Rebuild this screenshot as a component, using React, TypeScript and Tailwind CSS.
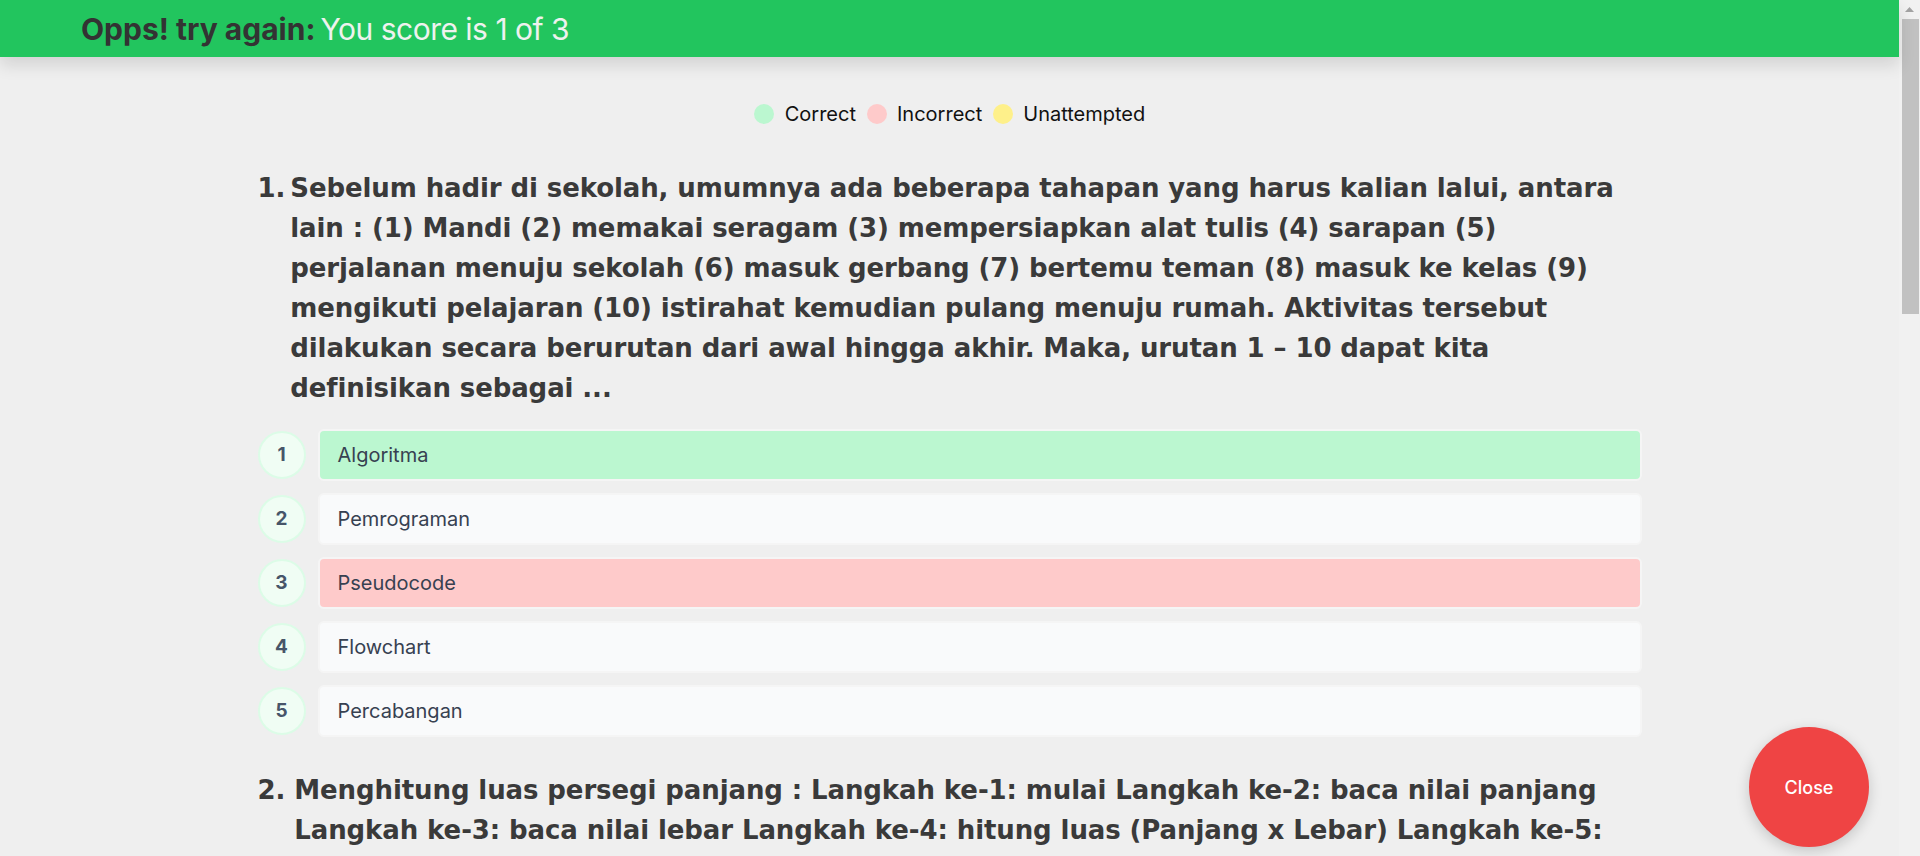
import React from "react";

const q1Lines = [
  "Sebelum hadir di sekolah, umumnya ada beberapa tahapan yang harus kalian lalui, antara",
  "lain : (1) Mandi (2) memakai seragam (3) mempersiapkan alat tulis (4) sarapan (5)",
  "perjalanan menuju sekolah (6) masuk gerbang (7) bertemu teman (8) masuk ke kelas (9)",
  "mengikuti pelajaran (10) istirahat kemudian pulang menuju rumah. Aktivitas tersebut",
  "dilakukan secara berurutan dari awal hingga akhir. Maka, urutan 1 – 10 dapat kita",
  "definisikan sebagai ...",
];

const q2Lines = [
  "Menghitung luas persegi panjang : Langkah ke-1: mulai Langkah ke-2: baca nilai panjang",
  "Langkah ke-3: baca nilai lebar Langkah ke-4: hitung luas (Panjang x Lebar) Langkah ke-5:",
];

type Opt = { n: number; label: string; state: "correct" | "wrong" | "none" };
const options: Opt[] = [
  { n: 1, label: "Algoritma", state: "correct" },
  { n: 2, label: "Pemrograman", state: "none" },
  { n: 3, label: "Pseudocode", state: "wrong" },
  { n: 4, label: "Flowchart", state: "none" },
  { n: 5, label: "Percabangan", state: "none" },
];

function Question({ num, lines, gap }: { num: string; lines: string[]; gap: string }) {
  return (
    <div className="flex text-[26px] leading-[40px] font-bold text-[#3a3a3a] font-['DejaVu_Sans',sans-serif] tracking-[-0.1px]">
      <span className={"whitespace-nowrap " + gap}>{num}</span>
      <div className="whitespace-nowrap">
        {lines.map((l, i) => (
          <div key={i}>{l}</div>
        ))}
      </div>
    </div>
  );
}

export default function App() {
  return (
    <div className="h-[856px] w-full overflow-hidden bg-[#efefef] flex font-['Inter','Noto_Sans',sans-serif]">
      <div className="flex-1 min-w-0 relative flex flex-col">
        <header className="relative z-10 h-[57px] bg-[#22c55e] shadow-[0_8px_16px_rgba(0,0,0,0.12)] flex items-center pl-[81px] shrink-0">
          <span className="text-[30px] leading-none font-bold text-[#333333]">Opps! try again:</span>
          <span className="text-[30px] leading-none text-[#eef2ee] ml-[5px] tracking-[-0.5px]">You score is 1 of 3</span>
        </header>

        <main className="flex flex-col">
          <div className="mt-[45px] flex items-center justify-center h-6 text-[20px] text-[#111111]">
            <span className="w-5 h-5 rounded-full bg-[#bbf7d0]" />
            <span className="ml-[11px]">Correct</span>
            <span className="ml-[11px] w-5 h-5 rounded-full bg-[#fecaca]" />
            <span className="ml-[10px]">Incorrect</span>
            <span className="ml-[11px] w-5 h-5 rounded-full bg-[#fef08a]" />
            <span className="ml-[10px]">Unattempted</span>
          </div>

          <div className="mx-auto w-[1384px] mt-[42px]">
            <Question num="1." lines={q1Lines} gap="pr-[5px]" />

            <div className="mt-[21px] flex flex-col gap-[12px]">
              {options.map((o) => (
                <div key={o.n} className="flex items-center gap-[12px]">
                  <div className="w-12 h-12 shrink-0 rounded-full bg-[#f0fdf4] border-2 border-[#dcfce7] flex items-center justify-center text-[19px] font-bold text-[#475569]">
                    {o.n}
                  </div>
                  <div
                    className={
                      "flex-1 h-[52px] rounded-md border-2 border-[#f5f5f5] flex items-center pl-[18px] text-[20px] text-[#374151] " +
                      (o.state === "correct"
                        ? "bg-[#bbf7d0]"
                        : o.state === "wrong"
                        ? "bg-[#fecaca]"
                        : "bg-[#f9fafb]")
                    }
                  >
                    {o.label}
                  </div>
                </div>
              ))}
            </div>

            <div className="mt-[33px]">
              <Question num="2." lines={q2Lines} gap="pr-[9px]" />
            </div>
          </div>
        </main>

        <button className="absolute right-[30px] bottom-[9px] w-[120px] h-[120px] rounded-full bg-[#ef4444] text-white text-[18px] font-medium shadow-[0_4px_14px_rgba(0,0,0,0.18)] flex items-center justify-center">
          Close
        </button>
      </div>

      <div className="w-[21px] shrink-0 bg-[#f1f1f1] flex flex-col items-center">
        <div className="h-[19px] flex items-center justify-center">
          <svg width="9" height="5" viewBox="0 0 9 5">
            <path d="M0 5 L4.5 0 L9 5 Z" fill="#a3a3a3" />
          </svg>
        </div>
        <div className="w-[17px] h-[295px] bg-[#c1c1c1] ml-[1px]" />
      </div>
    </div>
  );
}
